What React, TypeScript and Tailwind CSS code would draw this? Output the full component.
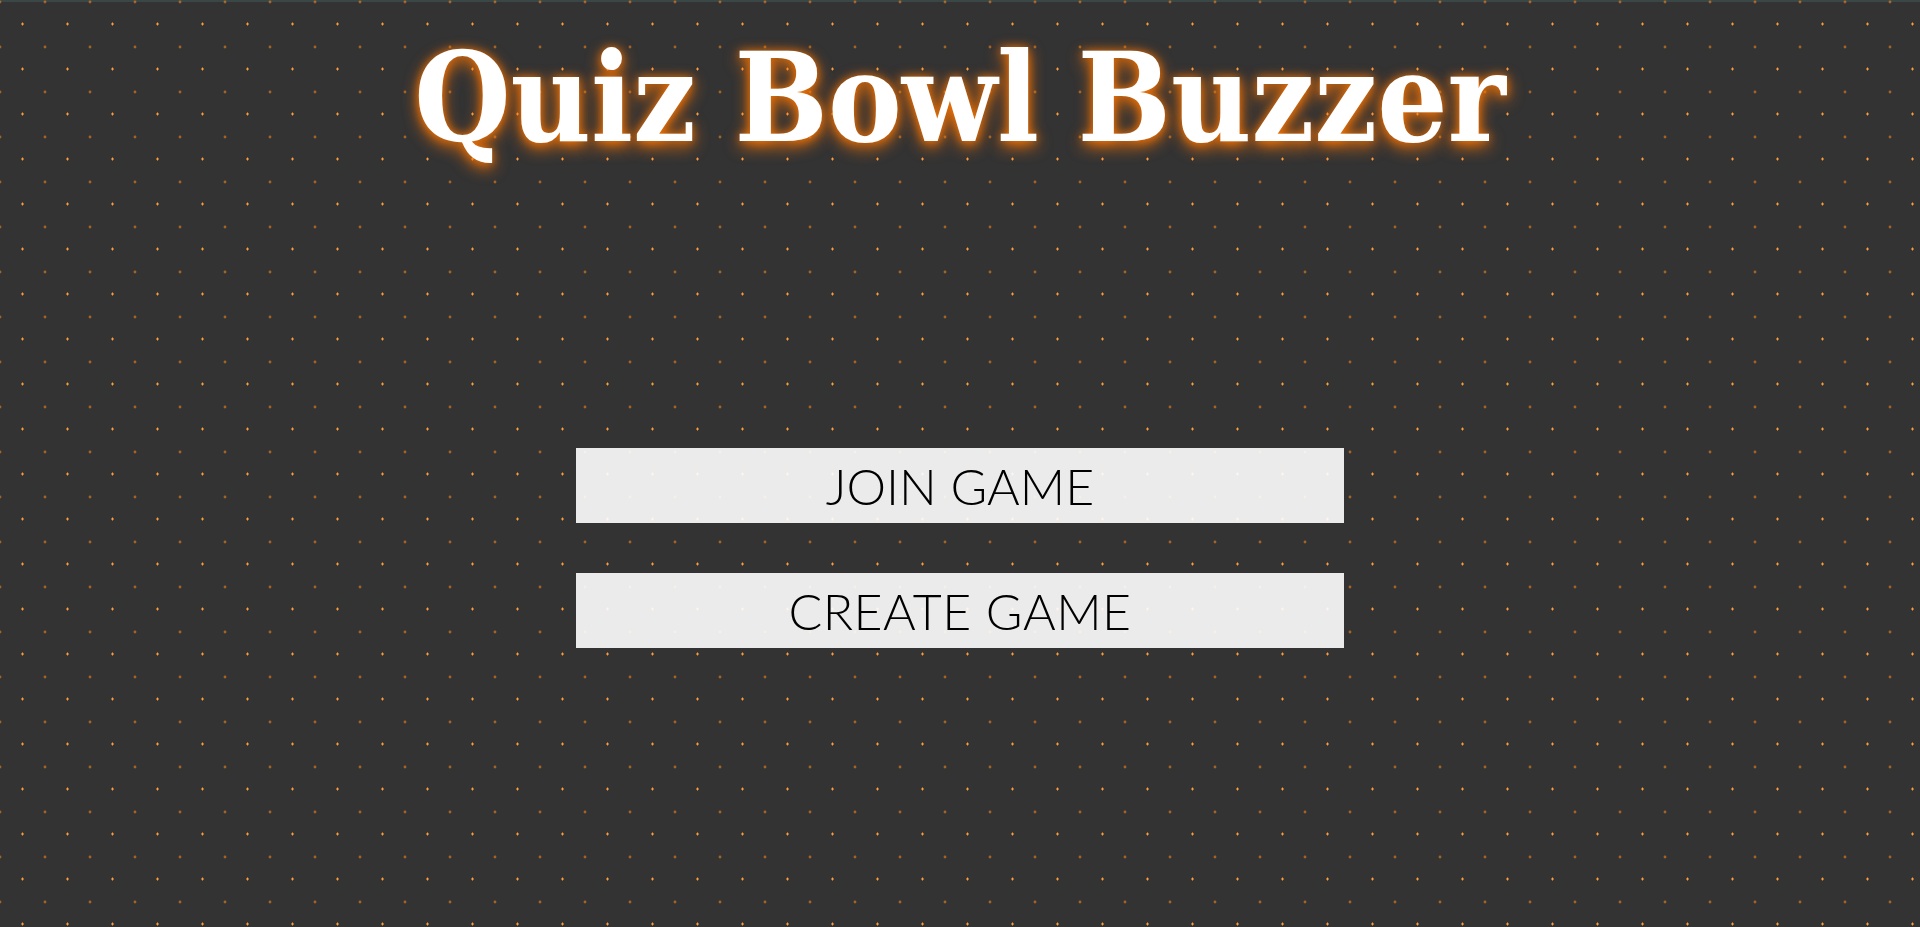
import React from "react";

function DotPattern() {
  return (
    <svg className="absolute inset-0 w-full h-full pointer-events-none" aria-hidden="true">
      <defs>
        <pattern id="dots" x="0" y="2" width="45" height="45" patternUnits="userSpaceOnUse">
          <circle cx="0" cy="0" r="1.4" fill="#ff8c1a" opacity="0.55" />
          <circle cx="45" cy="0" r="1.4" fill="#ff8c1a" opacity="0.55" />
          <circle cx="0" cy="45" r="1.4" fill="#ff8c1a" opacity="0.55" />
          <circle cx="45" cy="45" r="1.4" fill="#ff8c1a" opacity="0.55" />
          <rect x="21" y="21.5" width="3" height="1" fill="#ff9d3c" />
          <rect x="22" y="20.5" width="1" height="3" fill="#ff9d3c" />
        </pattern>
      </defs>
      <rect width="100%" height="100%" fill="url(#dots)" />
    </svg>
  );
}

export default function App() {
  return (
    <div className="relative w-full h-[927px] overflow-hidden bg-[#333333]">
      <div className="absolute top-0 left-0 right-0 h-[2px] bg-[#3b4747]" />
      <DotPattern />
      <div className="relative flex flex-col items-center">
        <h1
          className="mt-[29px] h-[138px] text-white font-bold text-[123px] leading-[138px] [font-family:'DejaVu_Serif_Condensed','DejaVu_Serif',serif] [font-stretch:condensed] [text-shadow:0_5px_16px_rgba(255,118,0,0.95),0_0_8px_rgba(255,118,0,0.7)]"
        >
          Quiz Bowl Buzzer
        </h1>
        <div className="mt-[281px] flex flex-col gap-[50px]">
          <button className="w-[768px] h-[75px] bg-white/90 text-black text-[50px] font-light leading-none [font-family:'Lato',sans-serif]">
            JOIN GAME
          </button>
          <button className="w-[768px] h-[75px] bg-white/90 text-black text-[50px] font-light leading-none tracking-[0.5px] [font-family:'Lato',sans-serif]">
            CREATE GAME
          </button>
        </div>
      </div>
    </div>
  );
}
